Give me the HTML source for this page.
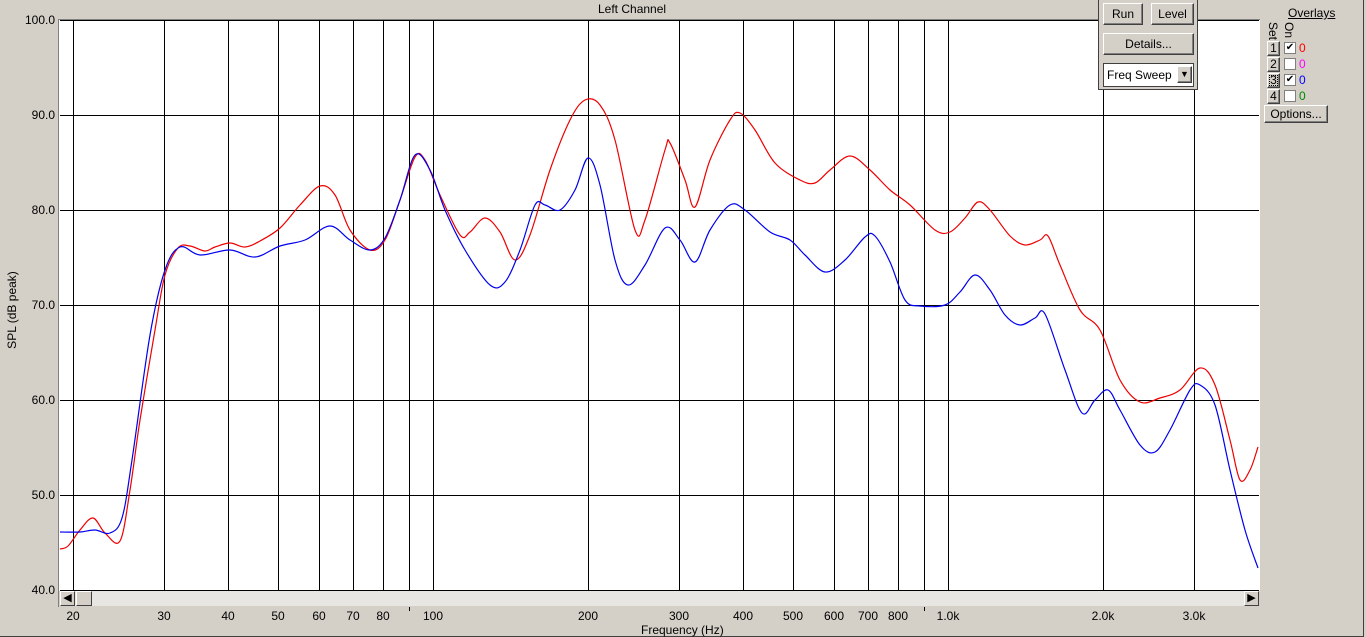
<!DOCTYPE html>
<html><head><meta charset="utf-8"><style>
body{margin:0;width:1366px;height:637px;background:#d4d0c8;font-family:"Liberation Sans",sans-serif;font-size:12px;position:relative;overflow:hidden}
.a{position:absolute}
.btn{position:absolute;background:#d4d0c8;border:1px solid;border-color:#fff #404040 #404040 #fff;box-shadow:inset -1px -1px #808080;text-align:center;font-size:12px;line-height:20px}
.sb{position:absolute;width:13px;height:13px;background:#d4d0c8;border:1px solid;border-color:#fff #404040 #404040 #fff;font-size:11px;line-height:13px;text-align:center}
.cb{position:absolute;width:10px;height:10px;background:#fff;border:1px solid #808080;font-size:10px;line-height:10px;text-align:center}
</style></head><body>
<div class="a" style="left:0;top:0;width:1363px;height:636px;border-right:1px solid #404040;border-bottom:1px solid #404040"></div>
<div class="a" style="left:598px;top:2px;font-size:12px">Left Channel</div>
<svg class="a" style="left:0;top:0" width="1366" height="637" id="s">
<rect x="58" y="19" width="1202" height="572" fill="#fff"/>
<line x1="58.5" y1="19" x2="58.5" y2="607" stroke="#808080"/>
<line x1="58" y1="19.5" x2="1260" y2="19.5" stroke="#808080"/>
<g id="g" stroke="#000" stroke-width="1"></g>
<path id="r" fill="none" stroke="#e00" stroke-width="1.2"/>
<path id="b" fill="none" stroke="#00e" stroke-width="1.2"/>
<rect x="60" y="591" width="1199" height="15" fill="#e8e6e2"/>
</svg>
<div class="sb" style="left:60px;top:591px">&#9664;</div>
<div class="sb" style="left:76px;top:591px;width:14px"></div>
<div class="sb" style="left:1244px;top:591px">&#9654;</div>
<div id="yl"></div><div id="xl"></div>
<div class="a" style="left:-33px;top:303px;transform:rotate(-90deg);width:90px;text-align:center">SPL (dB peak)</div>
<div class="a" style="left:641px;top:623px">Frequency (Hz)</div>
<div class="a" style="left:1098px;top:0;width:98px;height:89px;border:1px solid #404040;border-top:none;background:#d4d0c8">
<div class="btn" style="left:4px;top:3px;width:38px">Run</div>
<div class="btn" style="left:52px;top:3px;width:41px">Level</div>
<div class="btn" style="left:4px;top:33px;width:89px">Details...</div>
<div class="a" style="left:4px;top:63px;width:89px;height:22px;background:#fff;border:1px solid #404040"><span class="a" style="left:3px;top:4px">Freq Sweep</span><div class="btn" style="left:73px;top:2px;width:13px;height:15px;line-height:15px;font-size:9px">&#9660;</div></div>
</div>
<div class="a" style="left:1288px;top:6px;text-decoration:underline">Overlays</div>
<div class="a" style="left:1265px;top:22px;transform:rotate(90deg);transform-origin:0 0;left:1280px">Set</div>
<div class="a" style="left:1296px;top:22px;transform:rotate(90deg);transform-origin:0 0">On</div>
<div class="btn" style="left:1267px;top:41px;width:11px;height:13px;line-height:13px">1</div>
<div class="btn" style="left:1267px;top:57px;width:11px;height:13px;line-height:13px">2</div>
<div class="btn" style="left:1267px;top:73px;width:11px;height:13px;line-height:13px;outline:1px dotted #000;outline-offset:-3px">3</div>
<div class="btn" style="left:1267px;top:89px;width:11px;height:13px;line-height:13px">4</div>
<div class="cb" style="left:1284px;top:42px">&#10004;</div><div class="cb" style="left:1284px;top:58px"></div>
<div class="cb" style="left:1284px;top:74px">&#10004;</div><div class="cb" style="left:1284px;top:90px"></div>
<div class="a" style="left:1299px;top:41px;color:#f00">0</div><div class="a" style="left:1299px;top:57px;color:#f0f">0</div>
<div class="a" style="left:1299px;top:73px;color:#00f">0</div><div class="a" style="left:1299px;top:89px;color:#080">0</div>
<div class="btn" style="left:1264px;top:105px;width:62px;height:16px;line-height:16px">Options...</div>
<script>
var g=document.getElementById('g'),h='';
function X(f){return 433+515*Math.log10(f/100);}
for(var d=40;d<=100;d+=10){var y=20+(100-d)*9.5;h+='<line x1="60" x2="1259" y1="'+(y+.5)+'" y2="'+(y+.5)+'"/>';
document.getElementById('yl').innerHTML+='<div class="a" style="left:10px;width:45px;text-align:right;top:'+(y-7)+'px">'+d.toFixed(1)+'</div>';}
var fs=[20,30,40,50,60,70,80,90,100,200,300,400,500,600,700,800,900,1000,2000,3000],lb={20:'20',30:'30',40:'40',50:'50',60:'60',70:'70',80:'80',100:'100',200:'200',300:'300',400:'400',500:'500',600:'600',700:'700',800:'800',1000:'1.0k',2000:'2.0k',3000:'3.0k'};
var xl='';fs.forEach(function(f){var x=Math.round(X(f));h+='<line y1="20" y2="590" x1="'+(x+.5)+'" x2="'+(x+.5)+'"/>';
if(lb[f])xl+='<div class="a" style="left:'+(x-20)+'px;width:40px;text-align:center;top:609px">'+lb[f]+'</div>';else xl+='<div class="a" style="left:'+x+'px;top:607px;width:1px;height:4px;background:#000"></div>';});
g.innerHTML=h;document.getElementById('xl').innerHTML=xl;
function P(p){var s='M'+p[0][0]+','+p[0][1];for(var i=0;i<p.length-1;i++){var a=p[i-1]||p[i],b=p[i],c=p[i+1],d=p[i+2]||c;
s+='C'+(b[0]+(c[0]-a[0])/6)+','+(b[1]+(c[1]-a[1])/6)+' '+(c[0]-(d[0]-b[0])/6)+','+(c[1]-(d[1]-b[1])/6)+' '+c[0]+','+c[1];}return s;}
var R=[[60,549],[68,546],[80,530],[93,518],[105,533],[120,541],[130,490],[140,420],[155,330],[165,275],[178,248],[190,246],[205,251],[215,247],[230,243],[245,247],[260,241],[280,228],[300,205],[320,186],[335,195],[350,230],[370,250],[385,240],[400,200],[415,157],[425,160],[440,195],[460,235],[470,232],[485,218],[500,232],[515,260],[530,235],[550,170],[570,120],[585,100],[600,105],[615,140],[635,230],[645,220],[665,150],[670,143],[685,180],[695,207],[710,160],[730,120],[740,113],[755,130],[775,163],[800,180],[815,183],[830,170],[850,156],[870,170],[890,190],[910,205],[935,230],[950,232],[965,218],[978,202],[990,210],[1010,236],[1025,245],[1040,240],[1048,236],[1060,265],[1080,310],[1100,330],[1120,380],[1140,402],[1160,398],[1180,390],[1200,368],[1215,385],[1230,440],[1240,480],[1250,470],[1258,447]];
var B=[[60,532],[80,532],[95,530],[110,533],[122,518],[132,460],[150,335],[165,270],[180,247],[200,255],[230,250],[255,257],[280,246],[305,240],[330,226],[350,240],[370,250],[385,238],[400,200],[415,155],[430,170],[445,210],[465,250],[490,285],[505,282],[520,250],[535,205],[545,205],[560,210],[575,190],[588,158],[600,185],[615,260],[628,285],[645,265],[665,228],[680,240],[695,262],[710,230],[730,205],[745,210],[770,232],[790,240],[805,255],[825,272],[845,260],[865,237],[875,236],[890,262],[905,300],[920,306],[945,305],[960,292],[975,275],[990,290],[1005,315],[1020,325],[1035,318],[1045,314],[1065,370],[1082,413],[1095,400],[1108,390],[1120,410],[1140,445],[1155,452],[1170,430],[1190,390],[1200,385],[1215,405],[1230,470],[1245,530],[1258,568]];
document.getElementById('r').setAttribute('d',P(R));document.getElementById('b').setAttribute('d',P(B));
</script>
</body></html>
